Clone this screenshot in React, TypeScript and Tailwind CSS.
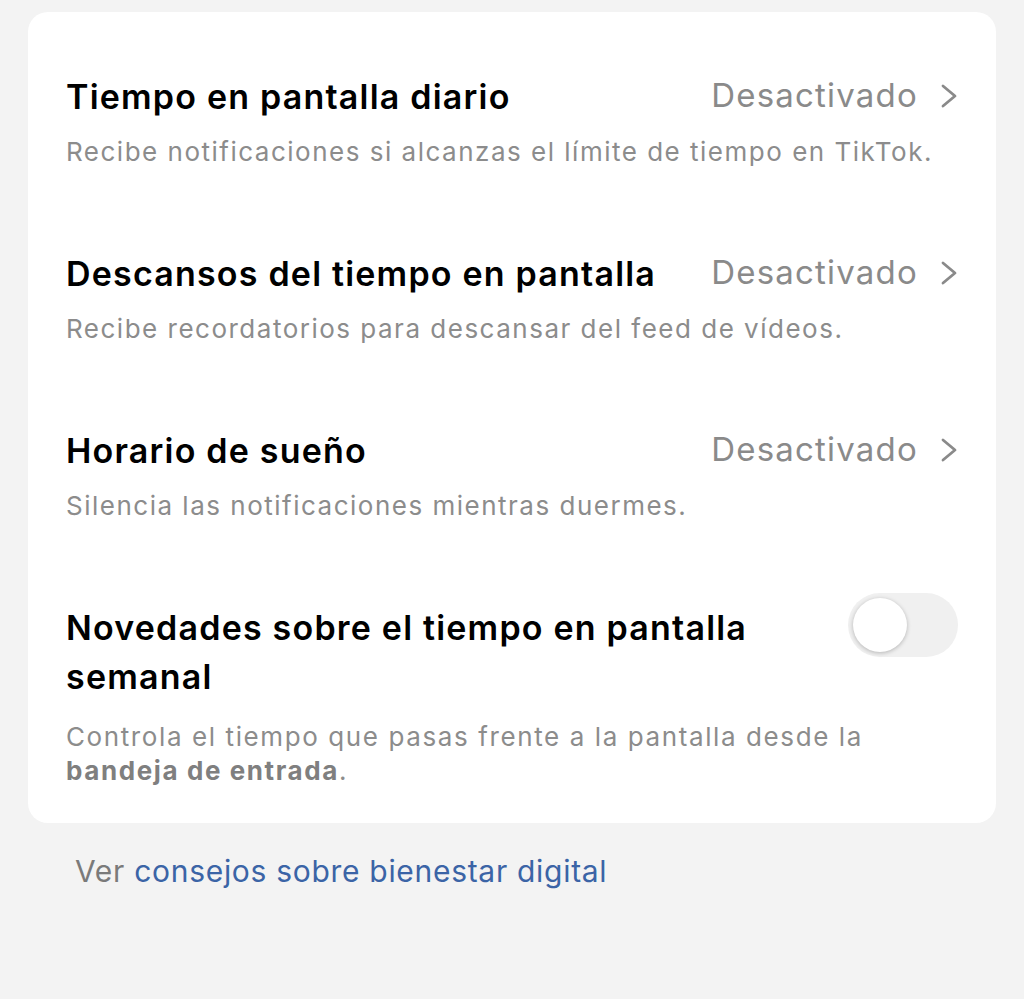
const rows = [
  {
    title: "Tiempo en pantalla diario",
    desc: "Recibe notificaciones si alcanzas el límite de tiempo en TikTok.",
  },
  {
    title: "Descansos del tiempo en pantalla",
    desc: "Recibe recordatorios para descansar del feed de vídeos.",
  },
  {
    title: "Horario de sueño",
    desc: "Silencia las notificaciones mientras duermes.",
  },
]

function Chevron() {
  return (
    <svg width="18" height="26" viewBox="0 0 18 26" fill="none" stroke="#8a8a8a" strokeWidth="2.8" strokeLinecap="round" strokeLinejoin="round">
      <polyline points="3,3 15,13 3,23" />
    </svg>
  )
}

export default function App() {
  return (
    <div className="min-h-[999px] w-[1024px] bg-[#f3f3f3] pt-[12px] font-['Inter',sans-serif]">
      <div className="mx-[28px] rounded-[20px] bg-white px-[38px] pt-[60px] pb-[35px]">
        {rows.map((row) => (
          <div key={row.title} className="mb-[80px]">
            <div className="flex h-[48px] items-center justify-between">
              <span className="text-[34px] font-semibold tracking-[1.2px] text-black">{row.title}</span>
              <span className="flex items-center gap-[22px] text-[33px] tracking-[1.2px] text-[#8a8a8a]">
                Desactivado
                <Chevron />
              </span>
            </div>
            <p className="mt-[15px] text-[26px] leading-[34px] tracking-[1.5px] text-[#8c8c8c]">{row.desc}</p>
          </div>
        ))}

        {/* Weekly updates toggle */}
        <div>
          <div className="flex items-start justify-between">
            <span className="w-[740px] text-[34px] leading-[49px] font-semibold tracking-[1.2px] text-black">
              Novedades sobre el tiempo en pantalla semanal
            </span>
            <div className="-mt-[10px] flex h-[64px] w-[110px] items-center rounded-full bg-[#f0f0f0] px-[5px]">
              <div className="h-[54px] w-[54px] rounded-full bg-white shadow-[0_1px_4px_rgba(0,0,0,0.25)]" />
            </div>
          </div>
          <p className="mt-[19px] text-[26px] leading-[34px] tracking-[1.6px] text-[#8c8c8c]">
            Controla el tiempo que pasas frente a la pantalla desde la
            <br />
            <span className="font-bold text-[#7f7f7f]">bandeja de entrada</span>.
          </p>
        </div>
      </div>

      <p className="mt-[28px] pl-[75px] text-[30px] leading-[40px] tracking-[0.7px] text-[#7a7a7a]">
        Ver <span className="text-[#3b64a6]">consejos sobre bienestar digital</span>
      </p>
    </div>
  )
}
